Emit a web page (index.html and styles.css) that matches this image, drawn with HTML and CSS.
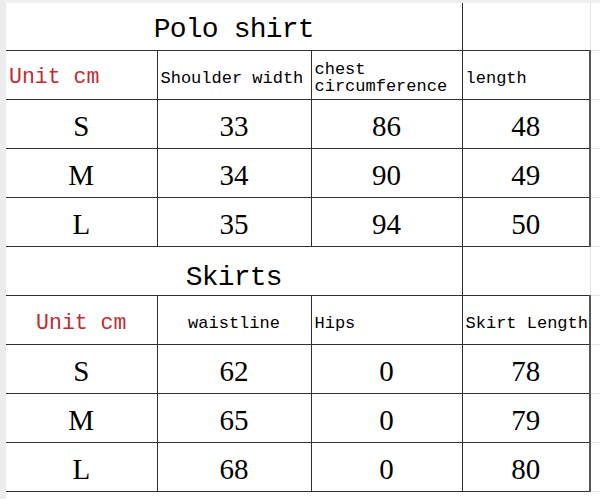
FILE: index.html
```html
<!DOCTYPE html>
<html lang="en">
<head>
<meta charset="utf-8">
<title>Size chart</title>
<link rel="stylesheet" href="styles.css">
</head>
<body>
<div class="sheet">
  <table class="chart">
    <colgroup>
      <col class="c1"><col class="c2"><col class="c3"><col class="c4"><col class="c5">
    </colgroup>
    <tbody>
      <tr class="title-row first">
        <td colspan="3" class="title">Polo shirt</td>
        <td class="blank"></td>
        <td class="grid"></td>
      </tr>
      <tr class="head-row">
        <td class="unit left">Unit cm</td>
        <td class="head left">Shoulder width</td>
        <td class="head left wrap">chest circumference</td>
        <td class="head left">length</td>
        <td class="grid"></td>
      </tr>
      <tr class="data-row">
        <td class="num">S</td><td class="num">33</td><td class="num">86</td><td class="num">48</td><td class="grid"></td>
      </tr>
      <tr class="data-row">
        <td class="num">M</td><td class="num">34</td><td class="num">90</td><td class="num">49</td><td class="grid"></td>
      </tr>
      <tr class="data-row">
        <td class="num">L</td><td class="num">35</td><td class="num">94</td><td class="num">50</td><td class="grid"></td>
      </tr>
      <tr class="title-row second">
        <td colspan="3" class="title">Skirts</td>
        <td class="blank"></td>
        <td class="grid"></td>
      </tr>
      <tr class="head-row low">
        <td class="unit center">Unit cm</td>
        <td class="head center">waistline</td>
        <td class="head left">Hips</td>
        <td class="head left">Skirt Length</td>
        <td class="grid"></td>
      </tr>
      <tr class="data-row">
        <td class="num">S</td><td class="num">62</td><td class="num">0</td><td class="num">78</td><td class="grid"></td>
      </tr>
      <tr class="data-row">
        <td class="num">M</td><td class="num">65</td><td class="num">0</td><td class="num">79</td><td class="grid"></td>
      </tr>
      <tr class="data-row">
        <td class="num">L</td><td class="num">68</td><td class="num">0</td><td class="num">80</td><td class="grid"></td>
      </tr>
    </tbody>
  </table>
  <span class="handle"></span>
</div>
</body>
</html>
```

FILE: styles.css
```css
html, body {
  margin: 0;
  padding: 0;
  background: #ffffff;
}

.sheet {
  position: relative;
  width: 600px;
  height: 499px;
  box-sizing: border-box;
  border-top: 3px solid #eeeeee;
  border-left: 6px solid #ececec;
  overflow: hidden;
}

.chart {
  border-collapse: collapse;
  table-layout: fixed;
  width: 594px;
  color: #111111;
}

.c1 { width: 151px; }
.c2 { width: 154px; }
.c3 { width: 151px; }
.c4 { width: 128px; }
.c5 { width: 10px; }

.chart tr {
  height: 49px;
}

.chart tr.first {
  height: 47px;
}

.chart td {
  border: 1px solid #303030;
  padding: 0;
  vertical-align: middle;
  overflow: hidden;
  white-space: nowrap;
  line-height: 1;
}

.chart td:first-child {
  border-left: none;
}

.chart td.grid {
  border-left: 2px solid #555555;
  border-top: 1px solid #e6e6e6;
  border-bottom: 1px solid #e6e6e6;
  border-right: none;
}

.title-row td {
  border-top: none;
}

.title-row.second td {
  border-top: 1px solid #303030;
}

.title-row td.blank {
  border-right: none;
}

.title-row td.grid {
  border-left: 1px solid #e6e6e6;
  border-top: none;
}

.chart .title {
  font-family: "Liberation Mono", "DejaVu Sans Mono", monospace;
  font-size: 28px;
  letter-spacing: -0.8px;
  text-align: center;
  padding-top: 8px;
  color: #000000;
}

.chart .second .title {
  padding-top: 15px;
}

.unit {
  font-family: "Liberation Mono", "DejaVu Sans Mono", monospace;
  font-size: 21.5px;
  color: #c42a30;
  padding-top: 7px !important;
}

.head {
  font-family: "Liberation Mono", "DejaVu Sans Mono", monospace;
  font-size: 17px;
  color: #000000;
  padding-top: 7px !important;
}

.low .unit {
  padding-top: 8px !important;
}

.low .head {
  padding-top: 8px !important;
}

.left {
  text-align: left;
  padding-left: 3px !important;
}

.center {
  text-align: center;
}

.wrap {
  white-space: normal !important;
  line-height: 21px;
  padding-top: 6px !important;
}

.num {
  font-family: "Liberation Serif", "Times New Roman", serif;
  font-size: 29px;
  text-align: center;
  padding-top: 5px !important;
  color: #000000;
}

.handle {
  position: absolute;
  left: -2px;
  top: 488px;
  width: 2px;
  height: 10px;
  background: #3c8a4a;
}
```
